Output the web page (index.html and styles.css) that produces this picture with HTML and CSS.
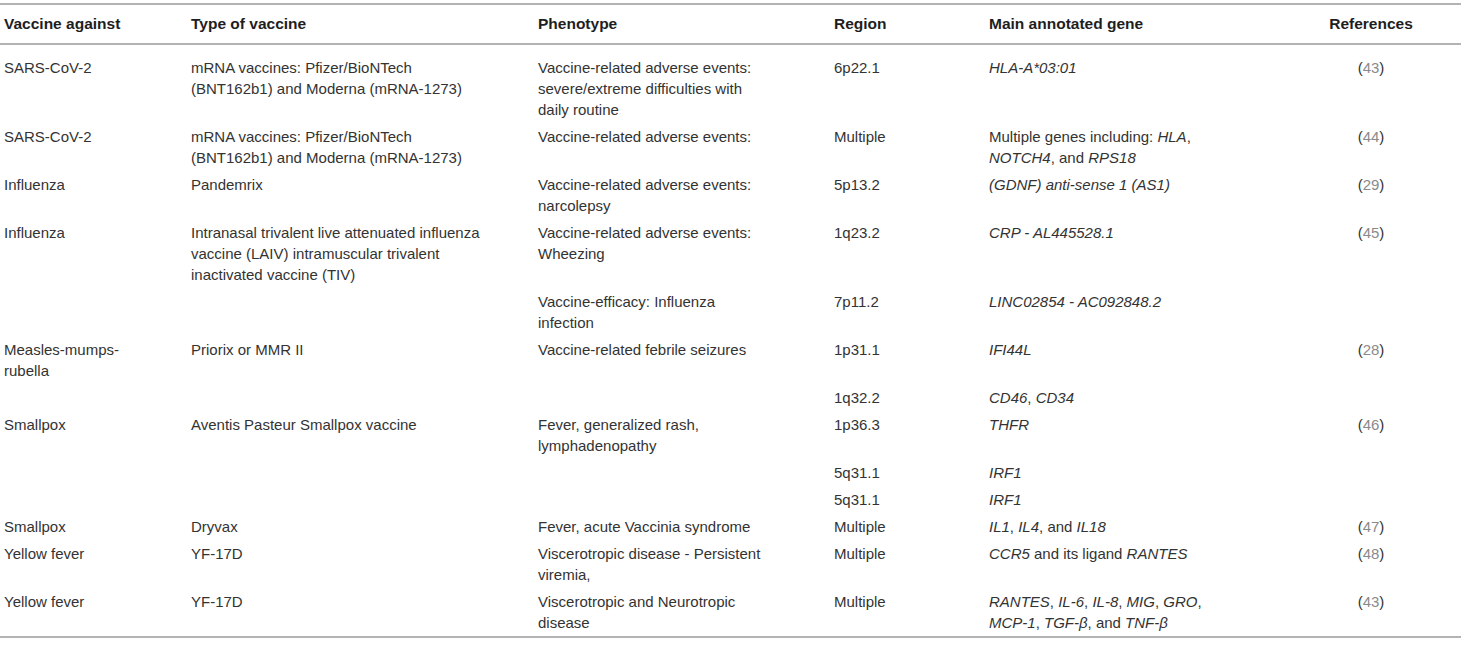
FILE: index.html
```html
<!DOCTYPE html>
<html>
<head>
  <title>Vaccine GWAS table</title>
  <link rel="stylesheet" href="styles.css">
</head>
<body>
  <table class="gwas">
    <colgroup>
      <col class="c-against">
      <col class="c-type">
      <col class="c-pheno">
      <col class="c-region">
      <col class="c-gene">
      <col class="c-ref">
    </colgroup>
    <thead>
      <tr>
        <th>Vaccine against</th>
        <th>Type of vaccine</th>
        <th>Phenotype</th>
        <th>Region</th>
        <th>Main annotated gene</th>
        <th class="ref">References</th>
      </tr>
    </thead>
    <tbody>
      <tr>
        <td>SARS-CoV-2</td>
        <td>mRNA vaccines: Pfizer/BioNTech<br>(BNT162b1) and Moderna (mRNA-1273)</td>
        <td>Vaccine-related adverse events:<br>severe/extreme difficulties with<br>daily routine</td>
        <td>6p22.1</td>
        <td><i>HLA-A*03:01</i></td>
        <td class="ref">(<a href="#">43</a>)</td>
      </tr>
      <tr>
        <td>SARS-CoV-2</td>
        <td>mRNA vaccines: Pfizer/BioNTech<br>(BNT162b1) and Moderna (mRNA-1273)</td>
        <td>Vaccine-related adverse events:</td>
        <td>Multiple</td>
        <td>Multiple genes including: <i>HLA</i>,<br><i>NOTCH4</i>, and <i>RPS18</i></td>
        <td class="ref">(<a href="#">44</a>)</td>
      </tr>
      <tr>
        <td>Influenza</td>
        <td>Pandemrix</td>
        <td>Vaccine-related adverse events:<br>narcolepsy</td>
        <td>5p13.2</td>
        <td><i>(GDNF) anti-sense 1 (AS1)</i></td>
        <td class="ref">(<a href="#">29</a>)</td>
      </tr>
      <tr>
        <td>Influenza</td>
        <td>Intranasal trivalent live attenuated influenza<br>vaccine (LAIV) intramuscular trivalent<br>inactivated vaccine (TIV)</td>
        <td>Vaccine-related adverse events:<br>Wheezing</td>
        <td>1q23.2</td>
        <td><i>CRP - AL445528.1</i></td>
        <td class="ref">(<a href="#">45</a>)</td>
      </tr>
      <tr>
        <td></td>
        <td></td>
        <td>Vaccine-efficacy: Influenza<br>infection</td>
        <td>7p11.2</td>
        <td><i>LINC02854 - AC092848.2</i></td>
        <td class="ref"></td>
      </tr>
      <tr>
        <td>Measles-mumps-<br>rubella</td>
        <td>Priorix or MMR II</td>
        <td>Vaccine-related febrile seizures</td>
        <td>1p31.1</td>
        <td><i>IFI44L</i></td>
        <td class="ref">(<a href="#">28</a>)</td>
      </tr>
      <tr>
        <td></td>
        <td></td>
        <td></td>
        <td>1q32.2</td>
        <td><i>CD46</i>, <i>CD34</i></td>
        <td class="ref"></td>
      </tr>
      <tr>
        <td>Smallpox</td>
        <td>Aventis Pasteur Smallpox vaccine</td>
        <td>Fever, generalized rash,<br>lymphadenopathy</td>
        <td>1p36.3</td>
        <td><i>THFR</i></td>
        <td class="ref">(<a href="#">46</a>)</td>
      </tr>
      <tr>
        <td></td>
        <td></td>
        <td></td>
        <td>5q31.1</td>
        <td><i>IRF1</i></td>
        <td class="ref"></td>
      </tr>
      <tr>
        <td></td>
        <td></td>
        <td></td>
        <td>5q31.1</td>
        <td><i>IRF1</i></td>
        <td class="ref"></td>
      </tr>
      <tr>
        <td>Smallpox</td>
        <td>Dryvax</td>
        <td>Fever, acute Vaccinia syndrome</td>
        <td>Multiple</td>
        <td><i>IL1</i>, <i>IL4</i>, and <i>IL18</i></td>
        <td class="ref">(<a href="#">47</a>)</td>
      </tr>
      <tr>
        <td>Yellow fever</td>
        <td>YF-17D</td>
        <td>Viscerotropic disease - Persistent<br>viremia,</td>
        <td>Multiple</td>
        <td><i>CCR5</i> and its ligand <i>RANTES</i></td>
        <td class="ref">(<a href="#">48</a>)</td>
      </tr>
      <tr>
        <td>Yellow fever</td>
        <td>YF-17D</td>
        <td>Viscerotropic and Neurotropic<br>disease</td>
        <td>Multiple</td>
        <td><i>RANTES</i>, <i>IL-6</i>, <i>IL-8</i>, <i>MIG</i>, <i>GRO</i>,<br><i>MCP-1</i>, <i>TGF-β</i>, and <i>TNF-β</i></td>
        <td class="ref">(<a href="#">43</a>)</td>
      </tr>
    </tbody>
  </table>
</body>
</html>
```

FILE: styles.css
```css
body {
  margin: 0;
  background-color: white;
  font-family: "Liberation Sans", Arial, Helvetica, sans-serif;
  color: #333;
}

.gwas {
  width: 1461px;
  margin-top: 3px;
  border-collapse: collapse;
  table-layout: fixed;
  border-top: 2px solid #b3b3b3;
  border-bottom: 2px solid #b3b3b3;
}

.c-against { width: 187px; }
.c-type { width: 347px; }
.c-pheno { width: 296px; }
.c-region { width: 155px; }
.c-gene { width: 340px; }
.c-ref { width: 136px; }

.gwas th {
  padding: 8px 4px 9px;
  font-size: 15.5px;
  line-height: 21px;
  font-weight: bold;
  color: #1e1e1e;
  text-align: left;
  border-bottom: 2px solid #b3b3b3;
}

.gwas td {
  padding: 3px 4px;
  font-size: 15px;
  line-height: 21px;
  vertical-align: top;
  white-space: nowrap;
}

.gwas tbody tr:first-child td {
  padding-top: 12px;
}

.gwas th.ref,
.gwas td.ref {
  text-align: center;
  padding-right: 48px;
}

.gwas td.ref a {
  color: #8a8a8a;
  text-decoration: none;
}
```
